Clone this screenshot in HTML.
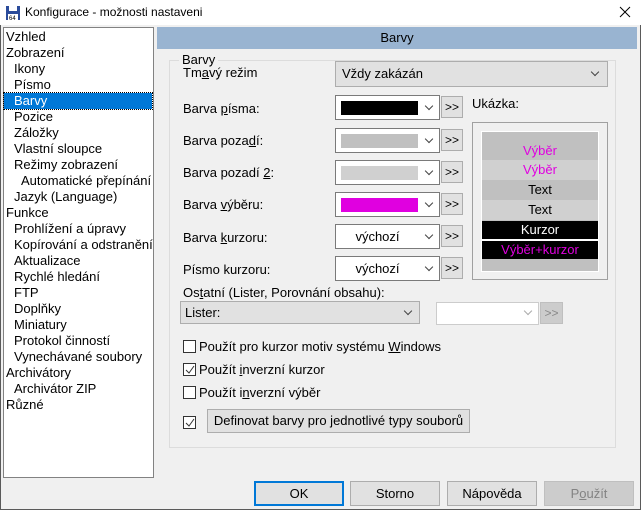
<!DOCTYPE html>
<html><head><meta charset="utf-8"><style>
*{box-sizing:border-box;margin:0;padding:0}
body{width:641px;height:510px;background:#f0f0f0;font-family:"Liberation Sans",sans-serif;font-size:13px;color:#000;position:relative;overflow:hidden}
.a{position:absolute;white-space:nowrap}
.win{position:absolute;left:0;top:0;width:641px;height:510px;border:1px solid #5a5a5a;border-top:none}
.tree{left:3px;top:27px;width:151px;height:451px;background:#fff;border:1px solid #828282}
.tree div{position:absolute;height:16px;line-height:16px}
.cb{background:#fff;border:1px solid #7a7a7a}
.btn{background:#e1e1e1;border:1px solid #adadad;text-align:center}
.chev{position:absolute;width:6px;height:6px;border-right:1px solid #444;border-bottom:1px solid #444;transform:rotate(45deg)}
.chk{position:absolute;width:13px;height:13px;border:1px solid #333;background:#fff}
.pr{position:absolute;left:0;width:116px;text-align:center;font-size:13px}
</style></head><body>
<div class="win"></div>
<div class="a" style="left:0;top:0;width:641px;height:25px;background:#fff"></div>
<svg class="a" style="left:5px;top:5px" width="16" height="16" viewBox="0 0 16 16"><rect x="1" y="1" width="14" height="14" fill="#2b4c9b"/><rect x="4" y="1" width="8" height="5" fill="#fff"/><rect x="3" y="9" width="10" height="6" fill="#fff"/><text x="4" y="15" font-size="6" fill="#000" font-family="Liberation Sans">64</text></svg>
<div class="a" style="left:25px;top:5px;font-size:12px">Konfigurace - možnosti nastaveni</div>
<svg class="a" style="left:619px;top:6px" width="12" height="12"><path d="M1 1L11 11M11 1L1 11" stroke="#000" stroke-width="1"/></svg>

<div class="a tree">
<div style="left:2px;top:1px">Vzhled</div>
<div style="left:2px;top:17px">Zobrazení</div>
<div style="left:10px;top:33px">Ikony</div>
<div style="left:10px;top:49px">Písmo</div>
<div style="left:0;top:65px;width:148px;background:#0078d7;color:#fff;padding-left:10px;outline:1px dotted #000">Barvy</div>
<div style="left:10px;top:81px">Pozice</div>
<div style="left:10px;top:97px">Záložky</div>
<div style="left:10px;top:113px">Vlastní sloupce</div>
<div style="left:10px;top:129px">Režimy zobrazení</div>
<div style="left:17px;top:145px">Automatické přepínání</div>
<div style="left:10px;top:161px">Jazyk (Language)</div>
<div style="left:2px;top:177px">Funkce</div>
<div style="left:10px;top:193px">Prohlížení a úpravy</div>
<div style="left:10px;top:209px">Kopírování a odstranění</div>
<div style="left:10px;top:225px">Aktualizace</div>
<div style="left:10px;top:241px">Rychlé hledání</div>
<div style="left:10px;top:257px">FTP</div>
<div style="left:10px;top:273px">Doplňky</div>
<div style="left:10px;top:289px">Miniatury</div>
<div style="left:10px;top:305px">Protokol činností</div>
<div style="left:10px;top:321px">Vynechávané soubory</div>
<div style="left:2px;top:337px">Archivátory</div>
<div style="left:10px;top:353px">Archivátor ZIP</div>
<div style="left:2px;top:369px">Různé</div>
</div>

<div class="a" style="left:157px;top:27px;width:480px;height:22px;background:#99b4d1;text-align:center;line-height:22px">Barvy</div>

<div class="a" style="left:169px;top:60px;width:447px;height:388px;border:1px solid #dcdcdc"></div>
<div class="a" style="left:179px;top:52px;background:#f0f0f0;padding:0 3px">Barvy</div>
<div class="a" style="left:183px;top:65px">Tm<u>a</u>vý režim</div>
<div class="a btn" style="left:335px;top:61px;width:273px;height:26px;text-align:left;padding-left:6px;line-height:24px">Vždy zakázán</div>
<div class="chev" style="left:592px;top:69px"></div>

<div class="a" style="left:183px;top:101px">Barva <u>p</u>ísma:</div>
<div class="a" style="left:183px;top:133px">Barva poza<u>d</u>í:</div>
<div class="a" style="left:183px;top:165px">Barva pozadí <u>2</u>:</div>
<div class="a" style="left:183px;top:197px">Barva <u>v</u>ýběru:</div>
<div class="a" style="left:183px;top:230px">Barva <u>k</u>urzoru:</div>
<div class="a" style="left:183px;top:262px">Písmo kurzoru:</div>

<div class="a cb" style="left:335px;top:95px;width:105px;height:25px"><div class="a" style="left:5px;top:5px;width:77px;height:14px;background:#000"></div></div>
<div class="a cb" style="left:335px;top:128px;width:105px;height:25px"><div class="a" style="left:5px;top:5px;width:77px;height:14px;background:#c0c0c0"></div></div>
<div class="a cb" style="left:335px;top:160px;width:105px;height:25px"><div class="a" style="left:5px;top:5px;width:77px;height:14px;background:#d0d0d0"></div></div>
<div class="a cb" style="left:335px;top:192px;width:105px;height:25px"><div class="a" style="left:5px;top:5px;width:77px;height:14px;background:#e000e0"></div></div>
<div class="a cb" style="left:335px;top:224px;width:105px;height:25px;text-align:center;line-height:23px;padding-right:20px">výchozí</div>
<div class="a cb" style="left:335px;top:256px;width:105px;height:25px;text-align:center;line-height:23px;padding-right:20px">výchozí</div>
<div class="chev" style="left:426px;top:103px"></div>
<div class="chev" style="left:426px;top:136px"></div>
<div class="chev" style="left:426px;top:168px"></div>
<div class="chev" style="left:426px;top:200px"></div>
<div class="chev" style="left:426px;top:232px"></div>
<div class="chev" style="left:426px;top:264px"></div>
<div class="a btn" style="left:441px;top:96px;width:22px;height:22px;line-height:20px;font-size:12px">&gt;&gt;</div>
<div class="a btn" style="left:441px;top:129px;width:22px;height:22px;line-height:20px;font-size:12px">&gt;&gt;</div>
<div class="a btn" style="left:441px;top:161px;width:22px;height:22px;line-height:20px;font-size:12px">&gt;&gt;</div>
<div class="a btn" style="left:441px;top:193px;width:22px;height:22px;line-height:20px;font-size:12px">&gt;&gt;</div>
<div class="a btn" style="left:441px;top:225px;width:22px;height:22px;line-height:20px;font-size:12px">&gt;&gt;</div>
<div class="a btn" style="left:441px;top:257px;width:22px;height:22px;line-height:20px;font-size:12px">&gt;&gt;</div>

<div class="a" style="left:472px;top:96px">Ukázka:</div>
<div class="a" style="left:472px;top:122px;width:136px;height:158px;border:1px solid #a0a0a0"></div>
<div class="a" style="left:481px;top:131px;width:118px;height:141px;border:1px solid #fff;background:#c0c0c0">
<div class="pr" style="top:9px;height:20px;line-height:20px;color:#e000e0">Výběr</div>
<div class="pr" style="top:28px;height:20px;line-height:20px;background:#d0d0d0;color:#e000e0">Výběr</div>
<div class="pr" style="top:48px;height:20px;line-height:20px">Text</div>
<div class="pr" style="top:68px;height:20px;line-height:20px;background:#d0d0d0">Text</div>
<div class="pr" style="top:89px;height:18px;line-height:18px;background:#000;color:#fff">Kurzor</div>
<div class="pr" style="top:107px;height:2px;background:#fff"></div>
<div class="pr" style="top:109px;height:18px;line-height:18px;background:#000;color:#e000e0">Výběr+kurzor</div>
</div>

<div class="a" style="left:183px;top:285px">Os<u>t</u>atní (Lister, Porovnání obsahu):</div>
<div class="a btn" style="left:180px;top:301px;width:240px;height:23px;text-align:left;padding-left:4px;line-height:21px">Lister:</div>
<div class="chev" style="left:405px;top:308px"></div>
<div class="a" style="left:436px;top:302px;width:103px;height:23px;background:#fff;border:1px solid #ccc"></div>
<div class="chev" style="left:525px;top:308px;border-color:#aaa"></div>
<div class="a" style="left:540px;top:302px;width:23px;height:22px;background:#ccc;border:1px solid #bfbfbf;color:#888;text-align:center;line-height:20px;font-size:12px">&gt;&gt;</div>

<div class="chk" style="left:183px;top:340px"></div>
<div class="a" style="left:199px;top:339px">Použít pro kurzor motiv systému <u>W</u>indows</div>
<div class="chk" style="left:183px;top:363px"></div>
<svg class="a" style="left:184px;top:364px" width="12" height="12"><path d="M2 6L5 9L10 2" fill="none" stroke="#333" stroke-width="1"/></svg>
<div class="a" style="left:199px;top:362px">Použít <u>i</u>nverzní kurzor</div>
<div class="chk" style="left:183px;top:386px"></div>
<div class="a" style="left:199px;top:385px">Použít i<u>n</u>verzní výběr</div>
<div class="chk" style="left:183px;top:416px"></div>
<svg class="a" style="left:184px;top:417px" width="12" height="12"><path d="M2 6L5 9L10 2" fill="none" stroke="#333" stroke-width="1"/></svg>
<div class="a btn" style="left:207px;top:409px;width:263px;height:24px;line-height:22px">Definovat barvy pro jednotlivé typy souborů</div>

<div class="a btn" style="left:254px;top:481px;width:90px;height:25px;line-height:21px;border:2px solid #0078d7">OK</div>
<div class="a btn" style="left:350px;top:481px;width:90px;height:25px;line-height:23px">Storno</div>
<div class="a btn" style="left:447px;top:481px;width:90px;height:25px;line-height:23px">Nápověda</div>
<div class="a" style="left:544px;top:481px;width:90px;height:25px;line-height:23px;background:#ccc;border:1px solid #bfbfbf;color:#838383;text-align:center">P<u>o</u>užít</div>
</body></html>
